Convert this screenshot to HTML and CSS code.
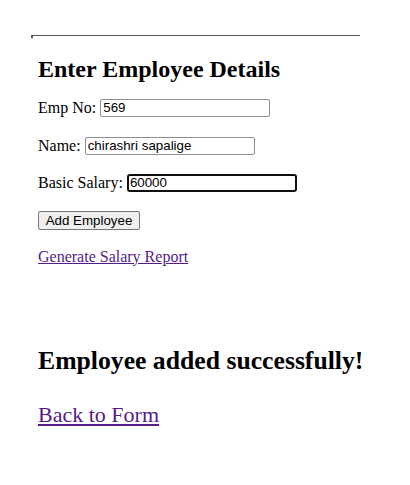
FILE: index.html
```html
<!DOCTYPE html>
<html>
<head>
<meta charset="utf-8">
<link rel="stylesheet" href="styles.css">
</head>
<body>
<div class="frame">
  <div class="frame-body">
    <h2 class="title">Enter Employee Details</h2>
    <form class="form">
      <div class="row"><label class="label">Emp No:</label> <span class="input">569</span></div>
      <div class="row"><label class="label">Name:</label> <span class="input">chirashri sapalige</span></div>
      <div class="row"><label class="label">Basic Salary:</label> <span class="input focused">60000</span></div>
      <div class="row"><span class="button">Add Employee</span></div>
    </form>
    <a class="link" href="#">Generate Salary Report</a>
  </div>
</div>
<div class="result">
  <h2 class="result-title">Employee added successfully!</h2>
  <a class="result-link" href="#">Back to Form</a>
</div>
</body>
</html>
```
FILE: styles.css
```css
html, body {
  margin: 0;
  padding: 0;
  background: #fff;
  color: #000;
  font-family: "Liberation Serif", "Times New Roman", serif;
}
body {
  padding: 35px 0 0 31px;
}
.frame {
  width: 329px;
  border-top: 1px solid #555;
  position: relative;
}
.frame::before {
  content: "";
  position: absolute;
  left: 0;
  top: 0;
  width: 2px;
  height: 3px;
  background: linear-gradient(#333, #ccc);
}
.frame-body {
  padding: 19px 0 0 7px;
}
.title {
  margin: 0 0 16px 0;
  font-size: 24px;
  font-weight: bold;
  line-height: 28px;
}
.form {
  display: flex;
  flex-direction: column;
  gap: 19.5px;
}
.row {
  display: flex;
  align-items: center;
  gap: 4px;
  font-size: 16px;
  height: 18px;
}
.input {
  box-sizing: border-box;
  width: 170px;
  height: 18px;
  border: 1px solid #8f8f8f;
  border-radius: 2px;
  padding: 0 2px;
  font-family: "Liberation Sans", Arial, sans-serif;
  font-size: 13.33px;
  line-height: 16px;
  color: #000;
}
.input.focused {
  border: 2px solid #101010;
  border-radius: 3px;
  padding: 0 1px;
  line-height: 14px;
}
.button {
  box-sizing: border-box;
  height: 19px;
  width: 102px;
  border: 1px solid #767676;
  border-radius: 2px;
  background: #efefef;
  font-family: "Liberation Sans", Arial, sans-serif;
  font-size: 13.33px;
  line-height: 17px;
  text-align: center;
}
.link {
  display: block;
  margin-top: 18px;
  font-size: 16px;
  color: #551a8b;
}
.result {
  padding: 0 0 0 7px;
  margin-top: 80px;
}
.result-title {
  margin: 0;
  font-size: 25.7px;
  line-height: 30px;
}
.result-link {
  display: block;
  margin-top: 26px;
  font-size: 22px;
  color: #551a8b;
}
```
